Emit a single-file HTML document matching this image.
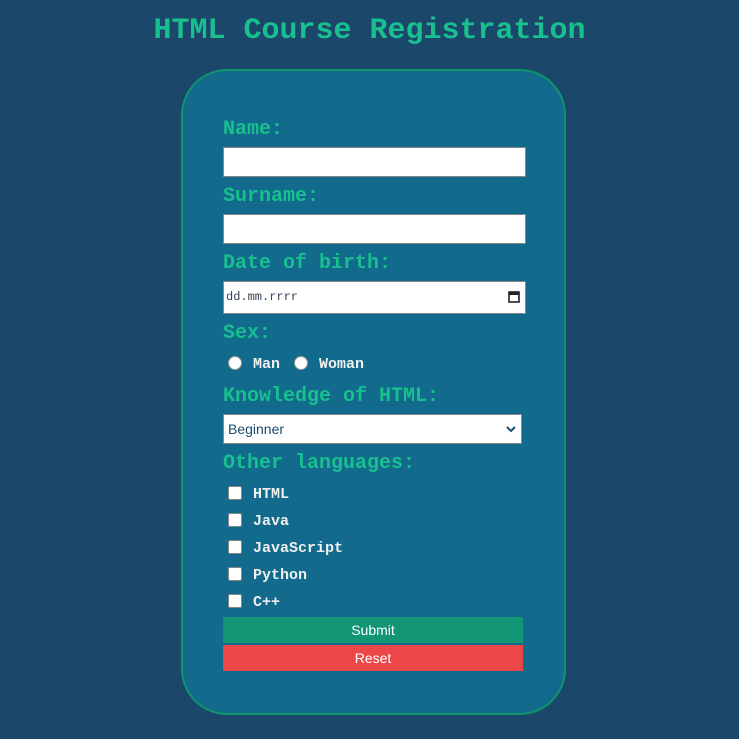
<!DOCTYPE html>
<html><head><style>
body{margin:0;width:739px;height:739px;background:#1b476b;position:relative;overflow:hidden;font-family:"Liberation Mono",monospace}
.a{position:absolute}
h1{position:absolute;margin:0;left:0;width:739px;text-align:center;top:13px;font-size:30px;color:#18c08f;font-weight:bold;line-height:36px}
.card{left:181px;top:69px;width:381px;height:642px;border:2px solid #11946e;border-radius:46px;background:#126a8c}
.l{position:absolute;left:223px;color:#18c08f;font-size:20px;line-height:24px;font-weight:bold}
.in{position:absolute;left:223px;width:301px;height:28px;background:#fff;border:1px solid #888}
.r{position:absolute;width:12px;height:12px;border-radius:50%;background:#fff;border:1px solid #999}
.c{position:absolute;left:228px;width:12px;height:12px;background:#fff;border:1px solid #888;border-radius:2px}
.t{position:absolute;font-size:15px;line-height:18px;font-weight:bold;color:#f0f0f0}
.b{position:absolute;left:223px;width:300px;height:26px;color:#fff;font:14px "Liberation Sans",sans-serif;text-align:center;line-height:26px}
</style></head><body>
<h1>HTML Course Registration</h1>
<div class="a card"></div>
<div class="l" style="top:118px">Name:</div>
<div class="in" style="top:147px"></div>
<div class="l" style="top:185px">Surname:</div>
<div class="in" style="top:214px"></div>
<div class="l" style="top:252px">Date of birth:</div>
<div class="in" style="top:281px;height:31px"><span style="position:absolute;left:2px;top:8px;font-size:12px;color:#345">dd.mm.rrrr</span>
<svg style="position:absolute;right:5px;top:8px" width="12" height="13" viewBox="0 0 12 13"><rect x="1" y="2" width="10" height="10" fill="none" stroke="#222" stroke-width="1.6"/><rect x="1" y="2" width="10" height="3" fill="#222"/></svg></div>
<div class="l" style="top:322px">Sex:</div>
<div class="r" style="left:228px;top:356px"></div><div class="t" style="left:253px;top:356px">Man</div>
<div class="r" style="left:294px;top:356px"></div><div class="t" style="left:319px;top:356px">Woman</div>
<div class="l" style="top:385px">Knowledge of HTML:</div>
<div class="in" style="top:414px;width:297px"><span style="position:absolute;left:4px;top:6px;font:14px 'Liberation Sans',sans-serif;color:#1b4c6e">Beginner</span>
<svg style="position:absolute;right:5px;top:10px" width="10" height="8" viewBox="0 0 10 8"><path d="M1 2L5 6L9 2" fill="none" stroke="#1b4c6e" stroke-width="2"/></svg></div>
<div class="l" style="top:452px">Other languages:</div>
<div class="c" style="top:486px"></div><div class="t" style="left:253px;top:486px">HTML</div>
<div class="c" style="top:513px"></div><div class="t" style="left:253px;top:513px">Java</div>
<div class="c" style="top:540px"></div><div class="t" style="left:253px;top:540px">JavaScript</div>
<div class="c" style="top:567px"></div><div class="t" style="left:253px;top:567px">Python</div>
<div class="c" style="top:594px"></div><div class="t" style="left:253px;top:594px">C++</div>
<div class="b" style="top:617px;background:#129574">Submit</div>
<div class="b" style="top:645px;background:#ec4748">Reset</div>
</body></html>
